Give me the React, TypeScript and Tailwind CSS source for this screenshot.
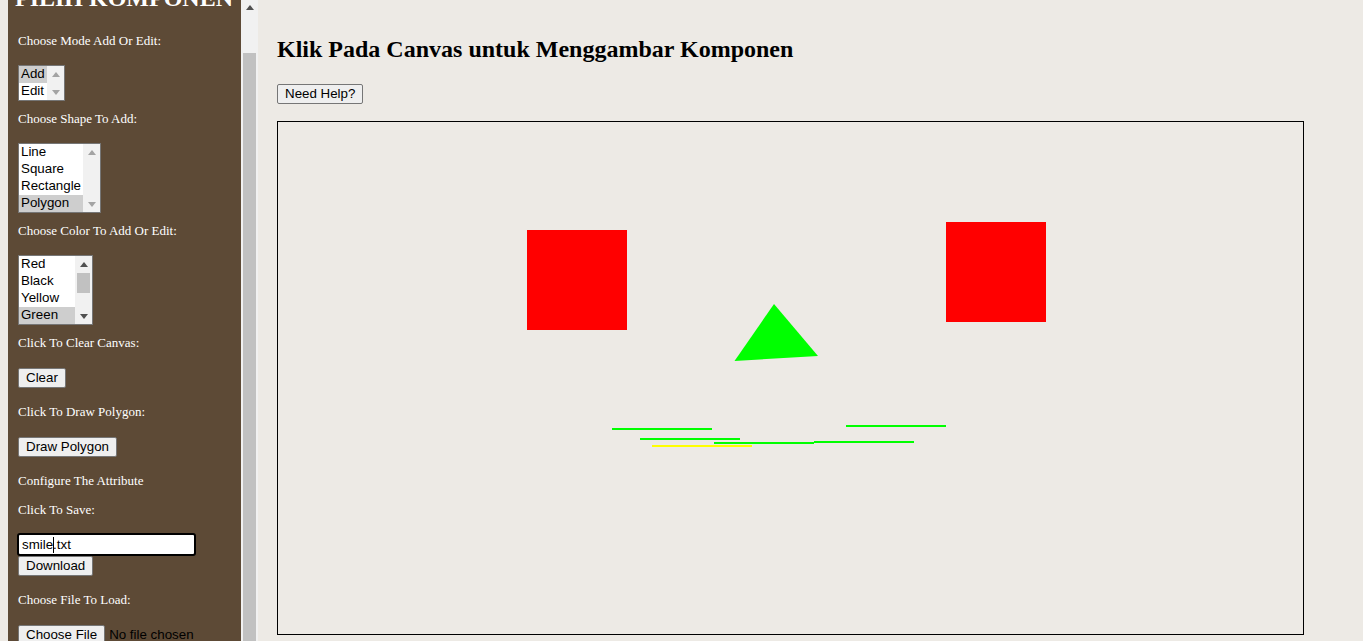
type ListBoxProps = {
  items: string[];
  selected: string;
  textWidth: string;
  scrollable?: boolean;
};

function Arrow({ up, dark }: { up?: boolean; dark?: boolean }) {
  return (
    <svg width="8" height="5" viewBox="0 0 8 5">
      <polygon
        points={up ? "0,5 8,5 4,0" : "0,0 8,0 4,5"}
        fill={dark ? "#505050" : "#a3a3a3"}
      />
    </svg>
  );
}

function ListBox({ items, selected, textWidth, scrollable }: ListBoxProps) {
  return (
    <div className="flex w-fit border border-[#767676] bg-white font-['Liberation_Sans',Arial,sans-serif] text-[13.33px] text-black">
      <div className={`flex flex-col ${textWidth}`}>
        {items.map((item) => (
          <div
            key={item}
            className={`h-[17px] px-[2px] pb-[2px] leading-[15px] ${
              item === selected ? "bg-[#cecece]" : ""
            }`}
          >
            {item}
          </div>
        ))}
      </div>
      <div className="flex w-[17px] flex-col items-center bg-[#f1f1f1]">
        <div className="flex h-[16px] items-center justify-center">
          <Arrow up dark={scrollable} />
        </div>
        {scrollable ? <div className="mt-[1px] h-[20px] w-[13px] bg-[#c1c1c1]" /> : null}
        <div className="flex-1" />
        <div className="flex h-[16px] items-center justify-center">
          <Arrow dark={scrollable} />
        </div>
      </div>
    </div>
  );
}

function Btn({ children, className = "" }: { children: React.ReactNode; className?: string }) {
  return (
    <button
      className={`block h-[20px] rounded-[2px] border border-[#767676] bg-[#efefef] px-[7px] font-['Liberation_Sans',Arial,sans-serif] text-[13.33px] leading-[16px] text-black ${className}`}
    >
      {children}
    </button>
  );
}

function Label({ children, className = "" }: { children: React.ReactNode; className?: string }) {
  return <p className={`text-[13px] leading-[15px] ${className}`}>{children}</p>;
}

export default function App() {
  return (
    <div className="flex h-[641px] overflow-hidden bg-[#edeae5] font-['Liberation_Serif',serif]">
      <div className="w-[8px] shrink-0" />

      <aside className="w-[233px] shrink-0 overflow-hidden bg-[#5d4a36] pl-[10px] text-white">
        {/* panel is scrolled a little, so the title is cut at the top */}
        <h2 className="-ml-[3px] -mt-[16px] whitespace-nowrap text-[24px] font-bold leading-[28px]">
          PILIH KOMPONEN
        </h2>
        <Label className="mt-[21px]">Choose Mode Add Or Edit:</Label>
        <div className="mt-[17px]">
          <ListBox items={["Add", "Edit"]} selected="Add" textWidth="w-[28px]" />
        </div>
        <Label className="mt-[10px]">Choose Shape To Add:</Label>
        <div className="mt-[17px]">
          <ListBox
            items={["Line", "Square", "Rectangle", "Polygon"]}
            selected="Polygon"
            textWidth="w-[64px]"
          />
        </div>
        <Label className="mt-[10px]">Choose Color To Add Or Edit:</Label>
        <div className="mt-[17px]">
          <ListBox
            items={["Red", "Black", "Yellow", "Green"]}
            selected="Green"
            textWidth="w-[56px]"
            scrollable
          />
        </div>
        <Label className="mt-[10px]">Click To Clear Canvas:</Label>
        <Btn className="mt-[18px]">Clear</Btn>
        <Label className="mt-[16px]">Click To Draw Polygon:</Label>
        <Btn className="mt-[18px]">Draw Polygon</Btn>
        <Label className="mt-[16px]">Configure The Attribute</Label>
        <Label className="mt-[14px]">Click To Save:</Label>
        <div className="-ml-[1px] mt-[16px] flex h-[23px] w-[179px] items-center rounded-[3px] border-2 border-black bg-white pl-[3px] font-['Liberation_Sans',Arial,sans-serif] text-[13.33px] text-black">
          smile
          <span className="-mx-[0.5px] inline-block h-[16px] w-px bg-black" />
          .txt
        </div>
        <Btn>Download</Btn>
        <Label className="mt-[16px]">Choose File To Load:</Label>
        <div className="mt-[18px] flex items-start">
          <Btn>Choose File</Btn>
          <span className="ml-[4px] whitespace-nowrap font-['Liberation_Sans',Arial,sans-serif] text-[13.33px] leading-[20px] text-black">
            No file chosen
          </span>
        </div>
      </aside>

      <div className="flex w-[17px] shrink-0 flex-col items-center bg-[#f1f1f1]">
        <div className="flex h-[15px] items-center justify-center">
          <Arrow up dark />
        </div>
        <div className="mt-[38px] w-[13px] flex-1 bg-[#c1c1c1]" />
      </div>

      <main className="flex-1 pl-[19px]">
        <h1 className="mt-[36px] whitespace-nowrap text-[24px] font-bold leading-[27px] text-black">
          Klik Pada Canvas untuk Menggambar Komponen
        </h1>
        <Btn className="mt-[21px]">Need Help?</Btn>
        <div className="mt-[17px] h-[514px] w-[1027px] border border-black">
          <svg width="1025" height="512" viewBox="0 0 1025 512">
            <rect x="249" y="108" width="100" height="100" fill="#ff0000" />
            <rect x="668" y="100" width="100" height="100" fill="#ff0000" />
            <polygon points="456.5,239 496,182 540,234" fill="#00ff00" />
            <g stroke="#00ff00" strokeWidth="2">
              <line x1="334" y1="307" x2="434" y2="307" />
              <line x1="362" y1="317" x2="462" y2="317" />
              <line x1="436" y1="321" x2="536" y2="321" />
              <line x1="536" y1="320" x2="636" y2="320" />
              <line x1="568" y1="304" x2="668" y2="304" />
            </g>
            <line x1="374" y1="324" x2="474" y2="324" stroke="#ffff00" strokeWidth="2" />
          </svg>
        </div>
      </main>
    </div>
  );
}
